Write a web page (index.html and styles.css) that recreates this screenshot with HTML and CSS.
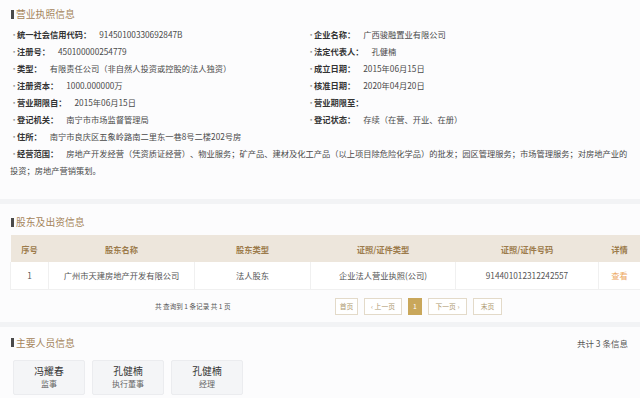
FILE: index.html
```html
<!DOCTYPE html>
<html lang="zh-CN">
<head>
<meta charset="utf-8">
<link rel="stylesheet" href="styles.css">
</head>
<body>
<section class="sec sec-license">
  <h2 class="title"><span class="bar"></span>营业执照信息</h2>
  <div class="grid">
    <div class="item"><b>统一社会信用代码：</b><span>91450100330692847B</span></div>
    <div class="item"><b>企业名称：</b><span>广西骏融置业有限公司</span></div>
    <div class="item"><b>注册号：</b><span>450100000254779</span></div>
    <div class="item"><b>法定代表人：</b><span>孔健楠</span></div>
    <div class="item"><b>类型：</b><span>有限责任公司（非自然人投资或控股的法人独资）</span></div>
    <div class="item"><b>成立日期：</b><span>2015年06月15日</span></div>
    <div class="item"><b>注册资本：</b><span>1000.000000万</span></div>
    <div class="item"><b>核准日期：</b><span>2020年04月20日</span></div>
    <div class="item"><b>营业期限自：</b><span>2015年06月15日</span></div>
    <div class="item"><b>营业期限至：</b><span></span></div>
    <div class="item"><b>登记机关：</b><span>南宁市市场监督管理局</span></div>
    <div class="item"><b>登记状态：</b><span>存续（在营、开业、在册）</span></div>
    <div class="item full"><b>住所：</b><span>南宁市良庆区五象岭路南二里东一巷8号二楼202号房</span></div>
    <div class="item full"><b>经营范围：</b><span>房地产开发经营（凭资质证经营）、物业服务；矿产品、建材及化工产品（以上项目除危险化学品）的批发；园区管理服务；市场管理服务；对房地产业的</span></div>
    <div class="cont full">投资；房地产营销策划。</div>
  </div>
</section>
<div class="band"></div>
<section class="sec sec-holder">
  <h2 class="title"><span class="bar"></span>股东及出资信息</h2>
  <table class="tbl">
    <colgroup>
      <col class="c1"><col class="c2"><col class="c3"><col class="c4"><col class="c5"><col class="c6">
    </colgroup>
    <thead>
      <tr><th>序号</th><th>股东名称</th><th>股东类型</th><th>证照/证件类型</th><th>证照/证件号码</th><th>详情</th></tr>
    </thead>
    <tbody>
      <tr><td>1</td><td>广州市天建房地产开发有限公司</td><td>法人股东</td><td>企业法人营业执照(公司)</td><td>914401012312242557</td><td class="link">查看</td></tr>
    </tbody>
  </table>
  <div class="pager">
    <div class="pager-info">共 查询到 1 条记录 共 1 页</div>
    <div class="pager-btns">
      <span class="pbtn w-first">首页</span>
      <span class="pbtn w-prev">‹ 上一页</span>
      <span class="pbtn cur">1</span>
      <span class="pbtn w-next">下一页 ›</span>
      <span class="pbtn w-last">末页</span>
    </div>
  </div>
</section>
<div class="band"></div>
<section class="sec sec-staff">
  <div class="head-row">
    <h2 class="title"><span class="bar"></span>主要人员信息</h2>
    <div class="count">共计 3 条信息</div>
  </div>
  <div class="cards">
    <div class="card"><div class="name">冯耀春</div><div class="role">监事</div></div>
    <div class="card"><div class="name">孔健楠</div><div class="role">执行董事</div></div>
    <div class="card"><div class="name">孔健楠</div><div class="role">经理</div></div>
  </div>
</section>
</body>
</html>
```
FILE: styles.css
```css
* { box-sizing: border-box; }
html, body {
  margin: 0;
  padding: 0;
  background: #fcfcfd;
  font-family: "Noto Sans CJK SC", "Noto Sans", sans-serif;
  text-spacing-trim: space-all;
  color: #444;
  width: 640px;
  height: 398px;
  overflow: hidden;
}
.sec { padding: 0 8px 0 10px; }
.sec-license { padding-top: 7px; padding-bottom: 20px; }
.sec-holder { padding-top: 11px; padding-bottom: 7px; padding-right: 0; }
.sec-staff { padding-top: 9px; }
.band { height: 5px; background: #f2f3f5; }

.title {
  margin: 0;
  display: flex;
  align-items: center;
  font-size: 9.8px;
  line-height: 14px;
  height: 14px;
  font-weight: 400;
  color: #a5845a;
}
.bar {
  display: inline-block;
  width: 3px;
  height: 9px;
  background: #4a4a4a;
  margin: 0 2px 0 1px;
}

.grid {
  margin-top: 5px;
  display: grid;
  grid-template-columns: 297px 1fr;
  font-size: 8.25px;
  line-height: 17px;
}
.item { white-space: nowrap; }
.full { grid-column: 1 / 3; }
.cont { color: #4a4a4a; white-space: nowrap; }
.item::before {
  content: "·";
  display: inline-block;
  width: 7px;
  color: #999;
  font-weight: 400;
}
.item b {
  font-weight: 700;
  color: #333;
  margin-right: 8px;
}
.item span { color: #4a4a4a; }

.tbl {
  margin-top: 6px;
  width: 630px;
  border-collapse: collapse;
  table-layout: fixed;
  font-size: 8.25px;
}
.c1 { width: 38px; }
.c2 { width: 146px; }
.c3 { width: 116px; }
.c4 { width: 145px; }
.c5 { width: 143px; }
.c6 { width: 42px; }
.tbl th {
  background: #ede6dc;
  color: #9c7b4b;
  font-weight: 700;
  height: 27px;
  text-align: center;
  padding: 0;
}
.tbl td {
  height: 27px;
  text-align: center;
  padding: 0;
  color: #555;
  background: #fff;
  border: 1px solid #f0f0f0;
  border-top: none;
}
.tbl td.link { color: #eda961; }

.pager {
  display: flex;
  align-items: center;
  margin-top: 8px;
  height: 17px;
}
.pager-info {
  font-size: 6.6px;
  color: #555;
  margin-left: 145px;
  width: 180px;
}
.pager-btns {
  display: flex;
  gap: 6px;
  font-size: 6.8px;
}
.pbtn {
  display: flex;
  align-items: center;
  justify-content: center;
  height: 17px;
  border: 1px solid #e3dac9;
  background: #fff;
  color: #ae9870;
}
.w-first { width: 23px; }
.w-prev { width: 38px; }
.w-next { width: 39px; }
.w-last { width: 29px; }
.pbtn.cur {
  width: 14px;
  background: #c9a75b;
  border-color: #c9a75b;
  color: #fff;
}

.head-row {
  display: flex;
  justify-content: space-between;
  align-items: center;
  padding-right: 4px;
}
.count { font-size: 8.5px; color: #555; }

.cards {
  display: flex;
  gap: 7px;
  margin-top: 10px;
  padding-left: 3px;
}
.card {
  width: 72px;
  height: 35px;
  background: #f4f5f7;
  border: 1px solid #ebecef;
  border-radius: 2px;
  display: flex;
  flex-direction: column;
  align-items: center;
  justify-content: center;
}
.name { font-size: 9.8px; line-height: 13px; color: #333; }
.role { font-size: 8px; line-height: 12px; color: #666; }
```
